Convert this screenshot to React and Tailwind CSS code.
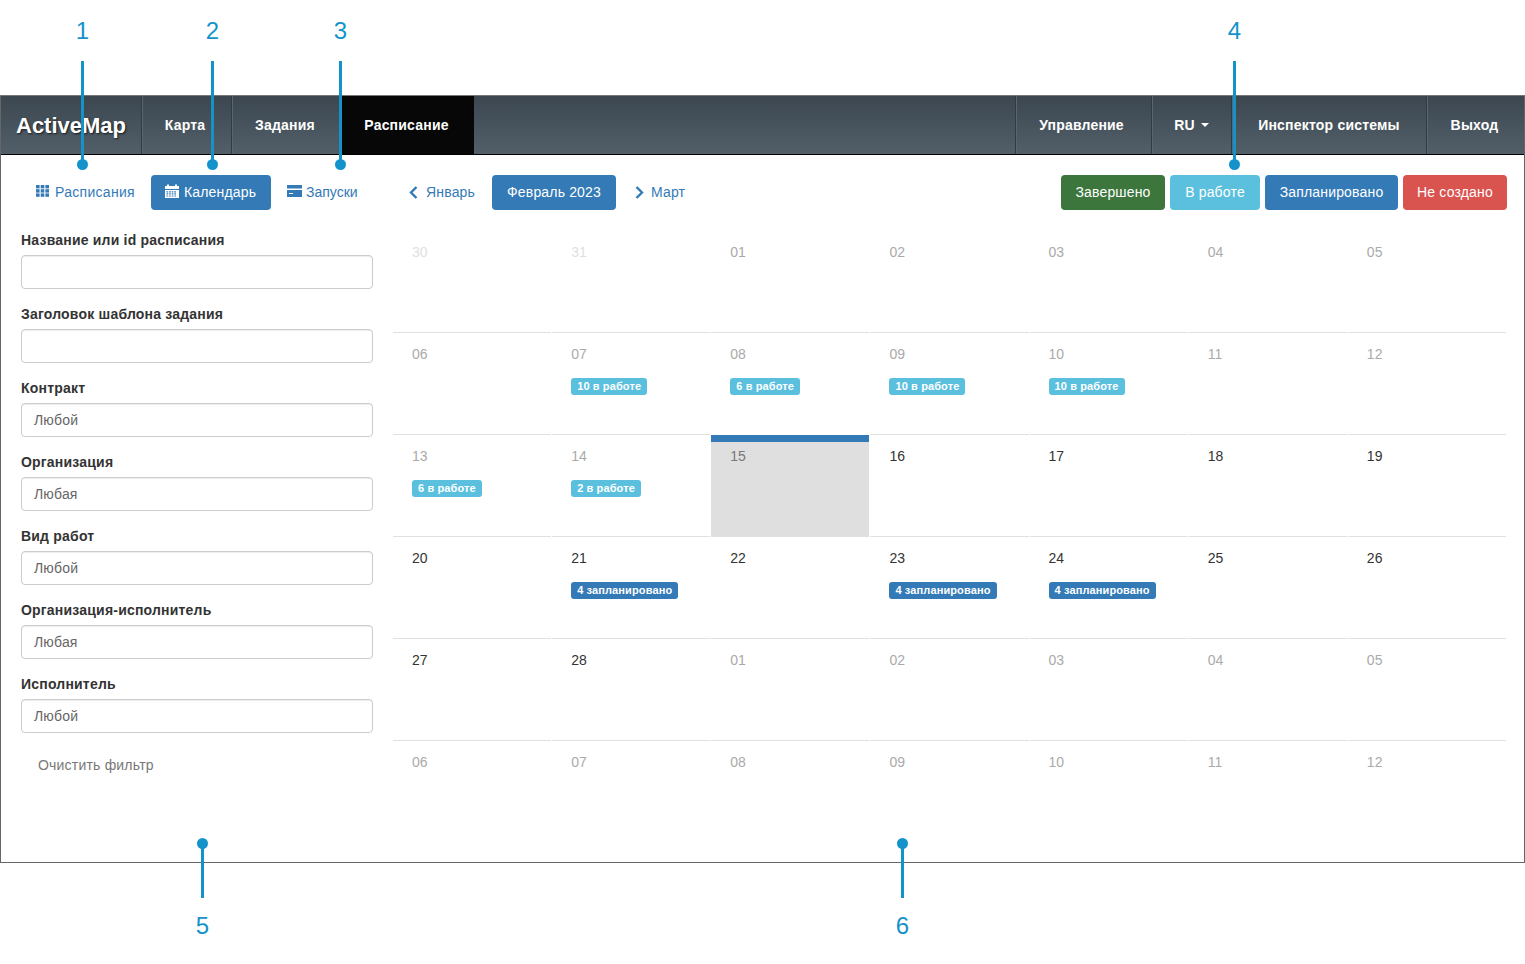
const FONT = "font-['Liberation_Sans',Arial,sans-serif]";

const Th = () => (
  <svg width="13" height="12" viewBox="0 0 13 12" fill="currentColor" className="shrink-0 mb-[3px]">
    {[0, 4.7, 9.4].map((x) => [0, 4.2, 8.4].map((y) => <rect key={`${x}-${y}`} x={x} y={y} width="3.6" height="3.4" />))}
  </svg>
);
const Cal = () => (
  <svg width="14" height="14" viewBox="0 0 14 14" fill="currentColor" className="shrink-0 mb-[3px]">
    <path d="M0 2h2V0.5h2V2h6V0.5h2V2h2v3H0z" />
    <path fillRule="evenodd" d="M0 6h14v8H0zM1.5 7.2v1.2h1.7V7.2zm2.6 0v1.2h1.7V7.2zm2.6 0v1.2h1.7V7.2zm2.6 0v1.2h1.7V7.2zm-7.8 2.1v1.2h1.7V9.3zm2.6 0v1.2h1.7V9.3zm2.6 0v1.2h1.7V9.3zm2.6 0v1.2h1.7V9.3zm-7.8 2.1v1.2h1.7v-1.2zm2.6 0v1.2h1.7v-1.2zm2.6 0v1.2h1.7v-1.2zm2.6 0v1.2h1.7v-1.2z" />
  </svg>
);
const Card = () => (
  <svg width="15" height="12" viewBox="0 0 15 12" fill="currentColor" className="shrink-0 mb-[3px]">
    <path fillRule="evenodd" d="M0 0h15v3.4H0zM0 5h15v7H0zM2 8v1h4V8z" />
  </svg>
);
const Chevron = ({ dir }) => (
  <svg width="9" height="13" viewBox="0 0 9 13" fill="none" stroke="currentColor" strokeWidth="2.4" className="shrink-0 mb-px">
    {dir === "l" ? <path d="M7.5 1 2 6.5 7.5 12" /> : <path d="M1.5 1 7 6.5 1.5 12" />}
  </svg>
);

const NavItem = ({ children, w, left, extra = "" }) => (
  <div
    className={`h-full flex items-center justify-center text-[14px] font-bold text-white tracking-[0.2px] ${w} ${extra} ${left ? "border-l border-[#313b42] shadow-[inset_1px_0_0_#5a666f]" : "border-r border-[#313b42] shadow-[1px_0_0_#5a666f]"}`}
  >
    {children}
  </div>
);

const Field = ({ label, value }) => (
  <div className="mb-[15px]">
    <div className="h-5 leading-5 mb-[5px] text-[14px] font-bold text-[#333] tracking-[0.2px]">{label}</div>
    <div className="h-[34px] w-full rounded border border-[#ccc] bg-white px-3 leading-8 text-[14px] text-[#666] tracking-[0.17px] shadow-[inset_0_1px_1px_rgba(0,0,0,0.075)]">
      {value}
    </div>
  </div>
);

const Badge = ({ children, kind }) => (
  <span
    className={`inline-block h-[17px] leading-[16px] mt-[14px] px-[6px] rounded-[3px] text-[11px] font-bold text-white tracking-[0.12px] ${kind === "p" ? "bg-[#337ab7]" : "bg-[#5bc0de]"}`}
  >
    {children}
  </span>
);

const weeks = [
  [["30", "f"], ["31", "f"], ["01"], ["02"], ["03"], ["04"], ["05"]],
  [["06"], ["07", 0, "10 в работе"], ["08", 0, "6 в работе"], ["09", 0, "10 в работе"], ["10", 0, "10 в работе"], ["11"], ["12"]],
  [["13", 0, "6 в работе"], ["14", 0, "2 в работе"], ["15", "t"], ["16", "c"], ["17", "c"], ["18", "c"], ["19", "c"]],
  [["20", "c"], ["21", "c", "4 запланировано", "p"], ["22", "c"], ["23", "c", "4 запланировано", "p"], ["24", "c", "4 запланировано", "p"], ["25", "c"], ["26", "c"]],
  [["27", "c"], ["28", "c"], ["01"], ["02"], ["03"], ["04"], ["05"]],
  [["06"], ["07"], ["08"], ["09"], ["10"], ["11"], ["12"]],
];

const Cell = ({ day, state, badge, kind, row }) => {
  const today = state === "t";
  const color = state === "f" ? "text-[#e0e0e0]" : state === "c" ? "text-[#333]" : today ? "text-[#777]" : "text-[#aaa]";
  return (
    <div
      className={
        today
          ? "relative z-10 h-[102px] mt-px -mb-px mr-px pl-[19px] bg-[#dfdfdf] border-t-[7px] border-[#337ab7] pt-1"
          : `h-[102px] mr-px pl-[19px] border-t pt-[11px] ${row === 0 ? "border-transparent" : "border-[#e0e0e0]"}`
      }
    >
      <div className={`h-5 leading-5 text-[14px] ${color}`}>{day}</div>
      {badge && <Badge kind={kind}>{badge}</Badge>}
    </div>
  );
};

const Callout = ({ n, x, top }) => (
  <>
    {top ? (
      <>
        <div className="absolute top-[16px] w-10 text-center text-[24px] leading-[30px] text-[#1493cb]" style={{ left: x - 19.5 }}>{n}</div>
        <div className="absolute top-[61px] h-[103px] w-[3px] bg-[#1493cb]" style={{ left: x - 1 }} />
        <div className="absolute top-[159px] h-[11px] w-[11px] rounded-full bg-[#1493cb]" style={{ left: x - 5 }} />
      </>
    ) : (
      <>
        <div className="absolute top-[838px] h-[11px] w-[11px] rounded-full bg-[#1493cb]" style={{ left: x - 5 }} />
        <div className="absolute top-[843px] h-[55px] w-[3px] bg-[#1493cb]" style={{ left: x - 1 }} />
        <div className="absolute top-[911px] w-10 text-center text-[24px] leading-[30px] text-[#1493cb]" style={{ left: x - 19.5 }}>{n}</div>
      </>
    )}
  </>
);

const Btn = ({ children, cls }) => (
  <div className={`h-[35px] flex items-center justify-center rounded text-[14px] text-white ${cls}`}>{children}</div>
);

export default function App() {
  return (
    <div className={`relative h-[964px] w-[1525px] bg-white overflow-hidden ${FONT}`}>
      <div className="h-[95px]" />
      <div className="h-[768px] border border-t-[#777] border-[#666] flex flex-col">
        <nav className="h-[59px] shrink-0 flex justify-between border-b border-black bg-gradient-to-b from-[#3c4750] to-[#525f69]">
          <div className="flex h-full">
            <div className="w-[141px] h-full pl-[15px] flex items-center text-[22px] font-bold text-white [text-shadow:1px_1px_2px_rgba(0,0,0,0.7)] border-r border-[#313b42] shadow-[1px_0_0_#5a666f]">
              ActiveMap
            </div>
            <NavItem w="w-[90px]" extra="pr-[3px]">Карта</NavItem>
            <NavItem w="w-[110px]" extra="pr-[3px]">Задания</NavItem>
            <div className="h-full flex items-center justify-center text-[14px] font-bold text-white w-[132px] pr-[3px] bg-[#070707] tracking-[0.2px]">Расписание</div>
          </div>
          <div className="flex h-full">
            <NavItem left w="w-[136px]" extra="pr-[4px]">Управление</NavItem>
            <NavItem left w="w-[80px]">
              RU
              <span className="ml-[6px] border-x-[4px] border-t-[4px] border-x-transparent border-t-white" />
            </NavItem>
            <NavItem left w="w-[195px]">Инспектор системы</NavItem>
            <NavItem left w="w-[98px]" extra="pr-[2px]">Выход</NavItem>
          </div>
        </nav>

        <div className="flex flex-1">
          <aside className="w-[392px] shrink-0 pl-5 pr-[20px] pt-5">
            <div className="flex items-center gap-[2px] h-[35px] mb-5 text-[14px] text-[#337ab7] tracking-[0.17px]">
              <div className="w-[128px] shrink-0 h-full px-[15px] flex items-center gap-[6px] tracking-[0.3px]"><Th />Расписания</div>
              <div className="w-[120px] shrink-0 h-full pl-[14px] flex items-center gap-[5px] rounded bg-[#337ab7] text-white"><Cal />Календарь</div>
              <div className="h-full shrink-0 pl-[14px] flex items-center gap-[4px] tracking-[0px]"><Card />Запуски</div>
            </div>
            <Field label="Название или id расписания" value="" />
            <Field label="Заголовок шаблона задания" value="" />
            <Field label="Контракт" value="Любой" />
            <Field label="Организация" value="Любая" />
            <Field label="Вид работ" value="Любой" />
            <Field label="Организация-исполнитель" value="Любая" />
            <Field label="Исполнитель" value="Любой" />
            <div className="pl-[17px] pt-[7px] h-5 leading-5 text-[14px] text-[#777] tracking-[0.2px]">Очистить фильтр</div>
          </aside>

          <main className="flex-1 pt-5 pr-[17px]">
            <div className="flex justify-between h-[35px] text-[14px] tracking-[0.17px]">
              <div className="flex items-center text-[#337ab7]">
                <div className="w-[99px] h-full pl-[16px] flex items-center gap-2"><Chevron dir="l" />Январь</div>
                <Btn cls="w-[124px] bg-[#337ab7]">Февраль 2023</Btn>
                <div className="pl-[19px] h-full flex items-center gap-[7px]"><Chevron dir="r" />Март</div>
              </div>
              <div className="flex gap-[5px]">
                <Btn cls="w-[104px] bg-[#3c763d]">Завершено</Btn>
                <Btn cls="w-[90px] bg-[#5bc0de]">В работе</Btn>
                <Btn cls="w-[133px] bg-[#337ab7]">Запланировано</Btn>
                <Btn cls="w-[104px] bg-[#d9534f]">Не создано</Btn>
              </div>
            </div>
            <div className="grid grid-cols-7 mt-5">
              {weeks.map((w, r) =>
                w.map(([day, state, badge, kind], c) => (
                  <Cell key={`${r}-${c}`} day={day} state={state} badge={badge} kind={kind} row={r} />
                ))
              )}
            </div>
          </main>
        </div>
      </div>
      <Callout n="1" x={82} top />
      <Callout n="2" x={212} top />
      <Callout n="3" x={340} top />
      <Callout n="4" x={1234} top />
      <Callout n="5" x={202} />
      <Callout n="6" x={902} />
    </div>
  );
}
